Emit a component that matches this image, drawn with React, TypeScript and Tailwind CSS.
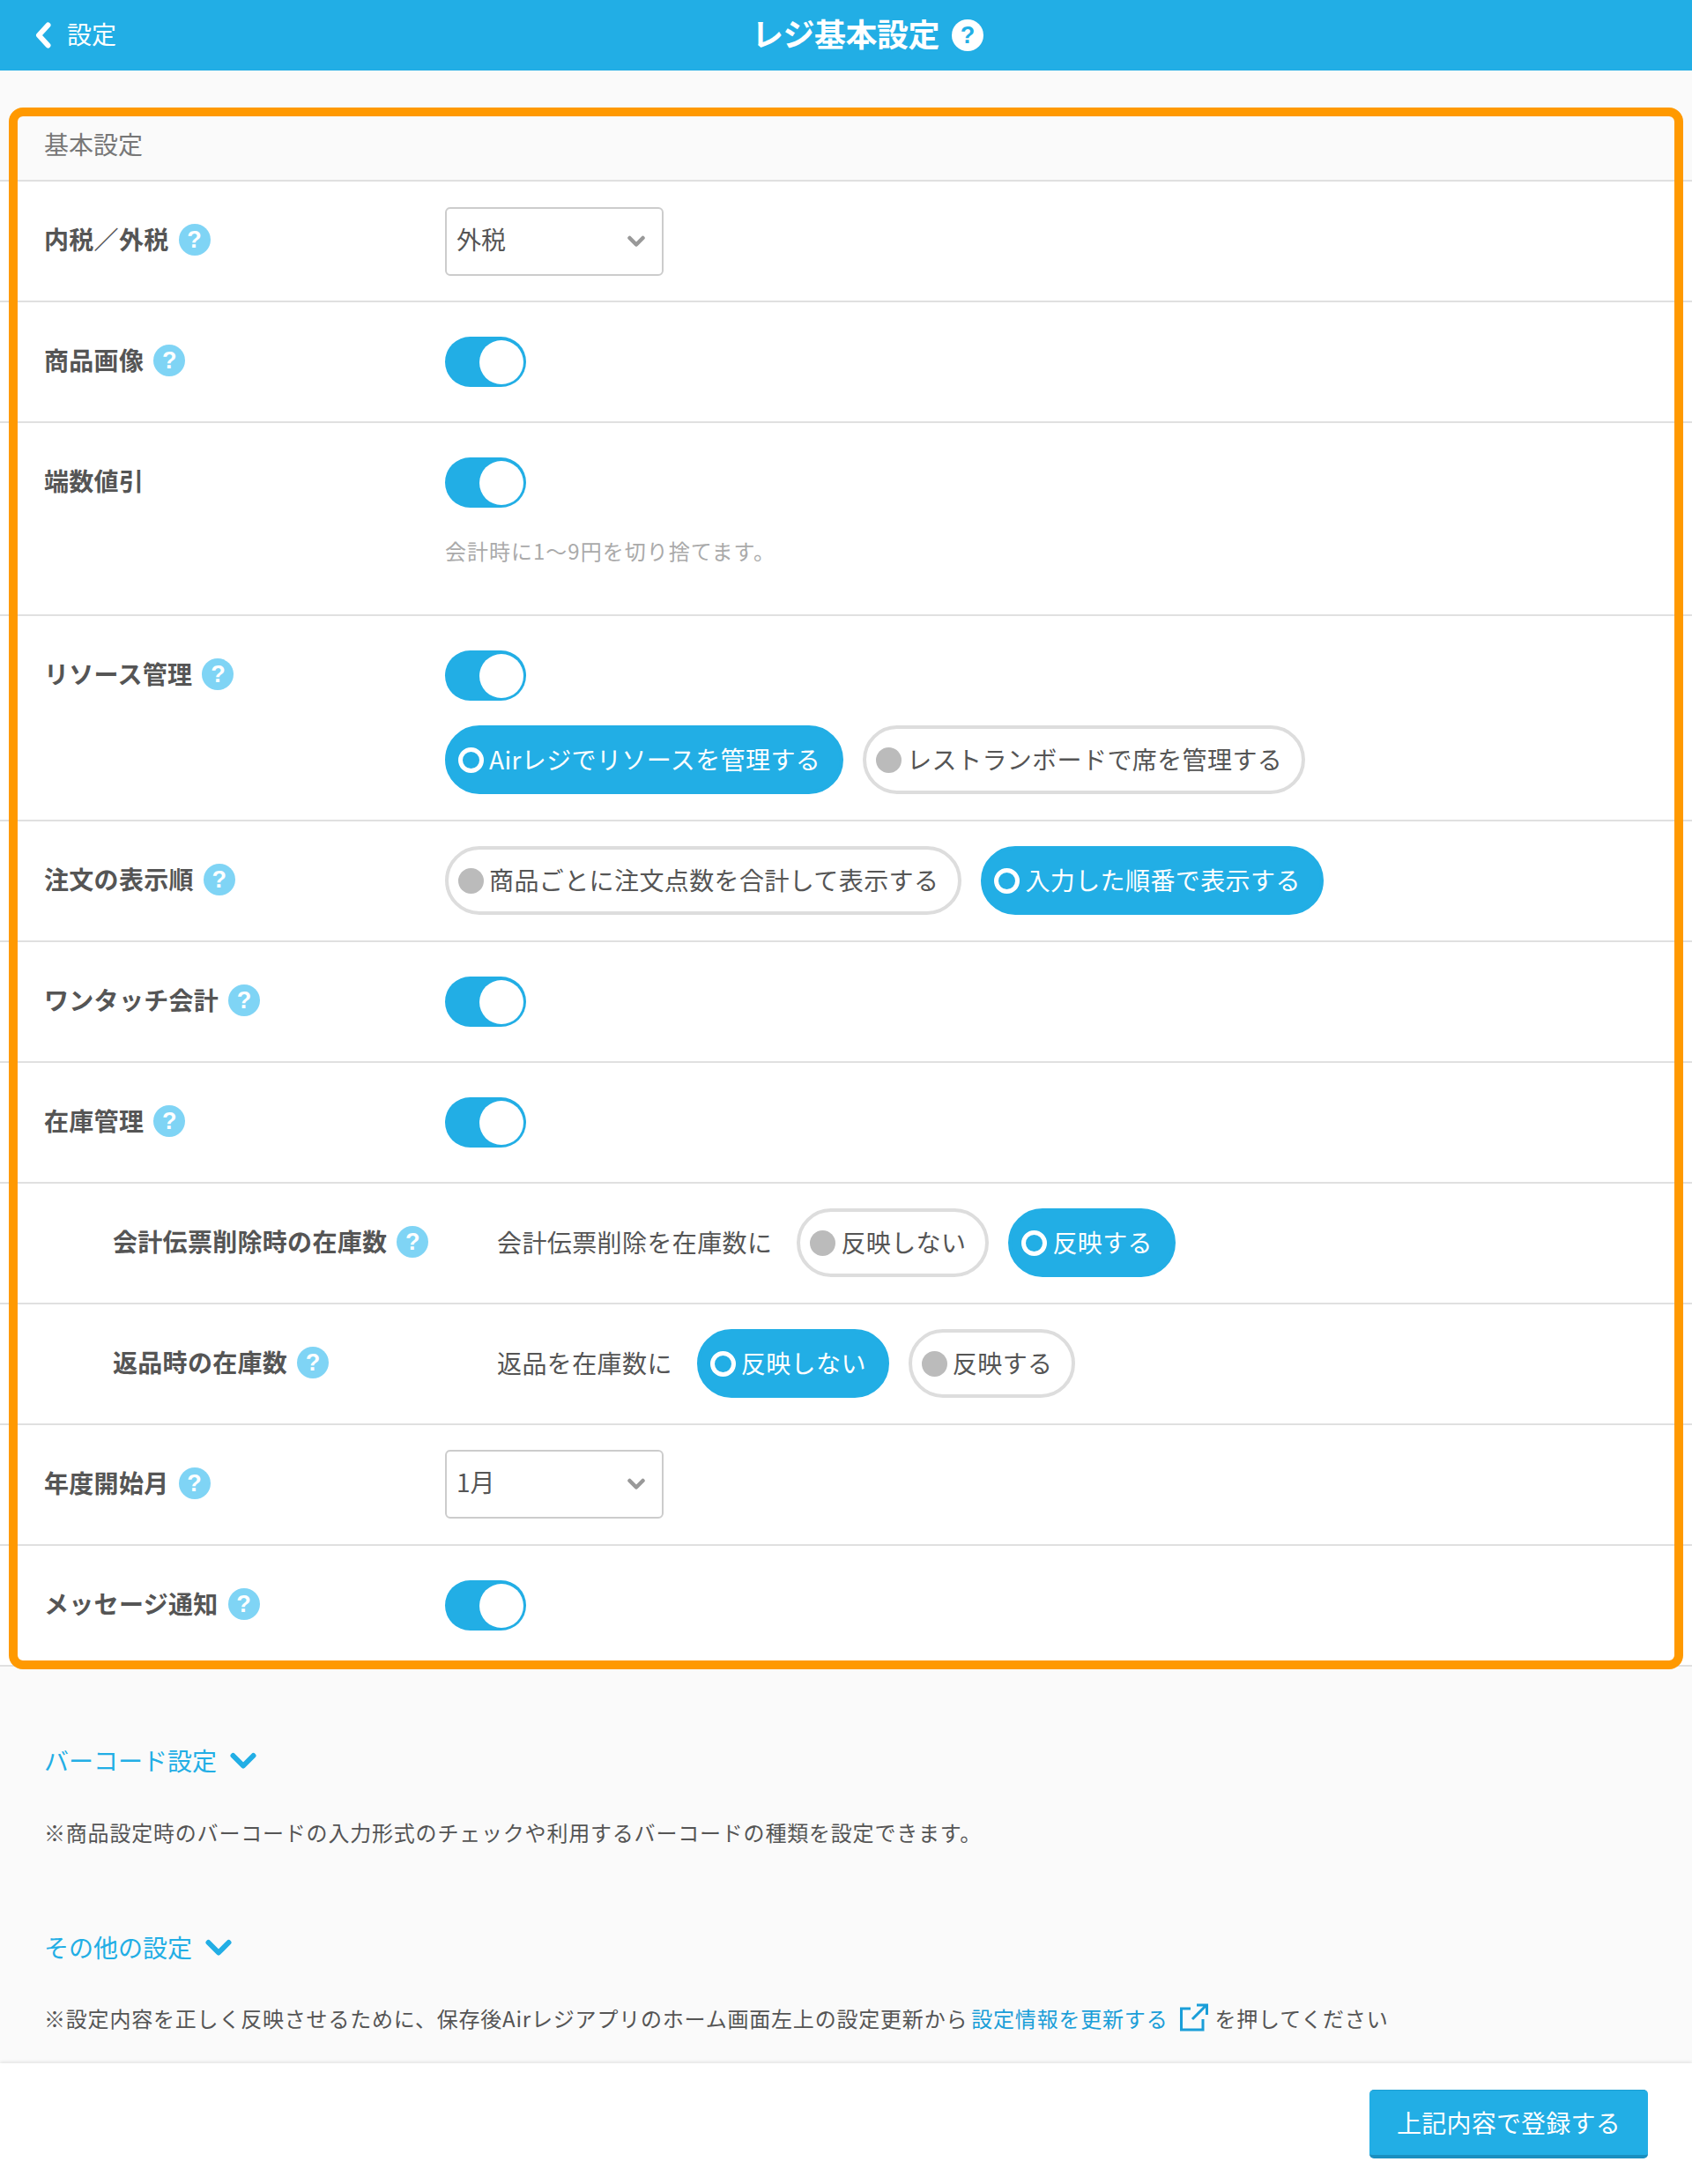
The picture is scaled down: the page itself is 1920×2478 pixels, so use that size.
const FONT = "font-['Noto_Sans_CJK_JP','Noto_Sans',sans-serif]";

function Help({ white = false }: { white?: boolean }) {
  return (
    <span
      className={`inline-flex h-[36px] w-[36px] shrink-0 items-center justify-center rounded-full font-['Liberation_Sans',sans-serif] text-[27px] leading-none font-bold ${
        white ? "bg-white text-[#22aee5]" : "bg-[#7fd4f5] text-white"
      }`}
    >
      ?
    </span>
  );
}

function Toggle() {
  return (
    <div className="flex h-[57px] w-[92px] items-center justify-end rounded-full bg-[#22aee5] pr-[3px]">
      <div className="h-[50px] w-[50px] rounded-full bg-white" />
    </div>
  );
}

function Select({ value }: { value: string }) {
  return (
    <div className="relative flex h-[78px] w-[248px] items-start rounded-[6px] border-2 border-[#cccccc] bg-white pt-[14px] pl-[11px] text-[28px] leading-[40px] text-[#555555]">
      {value}
      <svg className="absolute top-[30px] right-[19px]" width="20" height="14" viewBox="0 0 20 14" fill="none">
        <path d="M2.5 3 L10 10.5 L17.5 3" stroke="#999999" strokeWidth="4.5" strokeLinecap="round" strokeLinejoin="round" />
      </svg>
    </div>
  );
}

function Pill({ active, children }: { active?: boolean; children: string }) {
  return (
    <div
      className={`flex h-[78px] items-center rounded-full border-[4px] pr-[22px] pl-[11px] text-[28px] leading-[40px] ${
        active ? "border-[#22aee5] bg-[#22aee5] text-white" : "border-[#dddddd] bg-white text-[#555555]"
      }`}
    >
      {active ? (
        <span className="mr-[6px] h-[29px] w-[29px] shrink-0 rounded-full border-[5px] border-white" />
      ) : (
        <span className="mr-[6px] h-[29px] w-[29px] shrink-0 rounded-full bg-[#bbbbbb]" />
      )}
      <span className="pb-[2px] tracking-[0.4px] whitespace-nowrap">{children}</span>
    </div>
  );
}

function Label({ children, help = true }: { children: string; help?: boolean }) {
  return (
    <div className="flex h-[40px] items-center gap-[11px]">
      <span className="pb-[3px] text-[28px] leading-[40px] font-bold tracking-[0.3px] whitespace-nowrap text-[#555555]">{children}</span>
      {help && <Help />}
    </div>
  );
}

function Row({
  label,
  help = true,
  h = "h-[137px]",
  pt = "pt-[39px]",
  children,
}: {
  label: string;
  help?: boolean;
  h?: string;
  pt?: string;
  children: React.ReactNode;
}) {
  return (
    <div className={`flex ${h} border-b-2 border-[#e0e0e0] bg-white`}>
      <div className="w-[505px] shrink-0 pt-[46px] pl-[50px]">
        <Label help={help}>{label}</Label>
      </div>
      <div className={`flex flex-col ${pt}`}>{children}</div>
    </div>
  );
}

function SubRow({ label, text, children }: { label: string; text: string; children: React.ReactNode }) {
  return (
    <div className="flex h-[137px] border-b-2 border-[#e0e0e0] bg-white">
      <div className="w-[564px] shrink-0 pt-[46px] pl-[128px]">
        <Label>{label}</Label>
      </div>
      <div className="flex items-start gap-[22px] pt-[28px]">
        <div className="flex h-[78px] items-center pr-[6px] pb-[2px] text-[28px] leading-[40px] tracking-[0.4px] whitespace-nowrap text-[#555555]">{text}</div>
        {children}
      </div>
    </div>
  );
}

function Chevron() {
  return (
    <svg width="30" height="20" viewBox="0 0 30 20" fill="none">
      <path d="M3.5 4 L15 15.5 L26.5 4" stroke="#22aee5" strokeWidth="6" strokeLinecap="round" strokeLinejoin="round" />
    </svg>
  );
}

export default function App() {
  return (
    <div className={`relative h-[2478px] w-[1920px] overflow-hidden bg-[#fafafa] ${FONT}`}>
      <header className="flex h-[80px] items-center justify-between bg-[#22aee5] pr-[804px] pl-[40px] text-white">
        <div className="flex w-[100px] items-center gap-[18px]">
          <svg width="18" height="30" viewBox="0 0 18 30" fill="none">
            <path d="M14.5 3.5 L4 15 L14.5 26.5" stroke="#ffffff" strokeWidth="6" strokeLinecap="round" strokeLinejoin="round" />
          </svg>
          <span className="pb-[4px] text-[28px] leading-[40px] whitespace-nowrap">設定</span>
        </div>
        <div className="flex items-center gap-[14px]">
          <span className="pb-[7px] text-[36px] leading-[48px] font-bold tracking-[-0.5px] whitespace-nowrap">レジ基本設定</span>
          <Help white />
        </div>
      </header>

      <div className="box-border h-[126px] border-b-2 border-[#e0e0e0] pt-[63px] pl-[50px] text-[28px] leading-[40px] text-[#777777]">基本設定</div>

      <Row label="内税／外税" pt="pt-[29px]">
        <Select value="外税" />
      </Row>
      <Row label="商品画像">
        <Toggle />
      </Row>
      <Row label="端数値引" help={false} h="h-[219px]">
        <Toggle />
        <p className="mt-[31px] text-[24px] leading-[36px] tracking-[1px] whitespace-nowrap text-[#aaaaaa]">会計時に1〜9円を切り捨てます。</p>
      </Row>
      <Row label="リソース管理" h="h-[233px]">
        <Toggle />
        <div className="mt-[28px] flex gap-[22px]">
          <Pill active>Airレジでリソースを管理する</Pill>
          <Pill>レストランボードで席を管理する</Pill>
        </div>
      </Row>
      <Row label="注文の表示順" pt="pt-[28px]">
        <div className="flex gap-[22px]">
          <Pill>商品ごとに注文点数を合計して表示する</Pill>
          <Pill active>入力した順番で表示する</Pill>
        </div>
      </Row>
      <Row label="ワンタッチ会計">
        <Toggle />
      </Row>
      <Row label="在庫管理">
        <Toggle />
      </Row>
      <SubRow label="会計伝票削除時の在庫数" text="会計伝票削除を在庫数に">
        <Pill>反映しない</Pill>
        <Pill active>反映する</Pill>
      </SubRow>
      <SubRow label="返品時の在庫数" text="返品を在庫数に">
        <Pill active>反映しない</Pill>
        <Pill>反映する</Pill>
      </SubRow>
      <Row label="年度開始月" pt="pt-[28px]">
        <Select value="1月" />
      </Row>
      <Row label="メッセージ通知">
        <Toggle />
      </Row>

      <div className="pt-[87px] pl-[50px]">
        <div className="flex h-[40px] items-center gap-[15px] text-[28px] leading-[40px] text-[#22aee5]">
          <span className="pb-[2px]">バーコード設定</span>
          <Chevron />
        </div>
        <p className="mt-[43px] text-[24px] leading-[36px] tracking-[0.8px] whitespace-nowrap text-[#555555]">
          ※商品設定時のバーコードの入力形式のチェックや利用するバーコードの種類を設定できます。
        </p>
        <div className="mt-[93px] flex h-[40px] items-center gap-[15px] text-[28px] leading-[40px] text-[#22aee5]">
          <span className="pb-[2px]">その他の設定</span>
          <Chevron />
        </div>
        <div className="mt-[44px] flex h-[36px] items-center text-[24px] leading-[36px] tracking-[0.8px] whitespace-nowrap text-[#555555]">
          <span className="pb-[4px]">※設定内容を正しく反映させるために、保存後Airレジアプリのホーム画面左上の設定更新から</span>
          <span className="ml-[4px] pb-[4px] text-[#1a9ed8]">設定情報を更新する</span>
          <svg className="mr-[7px] ml-[14px] -translate-y-[3px]" width="32" height="32" viewBox="0 0 32 32" fill="none">
            <path d="M12 6 H1.5 V30 H26 V18" stroke="#1a9ed8" strokeWidth="3" />
            <path d="M14 18 L30 2 M19 2 H30.5 V13" stroke="#1a9ed8" strokeWidth="3" />
          </svg>
          <span className="pb-[4px]">を押してください</span>
        </div>
      </div>

      <footer className="absolute right-0 bottom-0 left-0 flex h-[137px] justify-end bg-white pt-[30px] pr-[50px] shadow-[0_-2px_3px_rgba(0,0,0,0.08)]">
        <div className="flex h-[78px] w-[316px] items-center justify-center rounded-[5px] border-t border-b-[4px] border-t-[#1c9fd3] border-b-[#1a8fc0] bg-[#22aee5] pb-[2px] text-[28px] leading-[40px] tracking-[0.2px] text-white">
          上記内容で登録する
        </div>
      </footer>

      <div className="pointer-events-none absolute top-[122px] left-[10px] h-[1772px] w-[1900px] rounded-[16px] border-[10px] border-[#ff9900]" />
    </div>
  );
}
